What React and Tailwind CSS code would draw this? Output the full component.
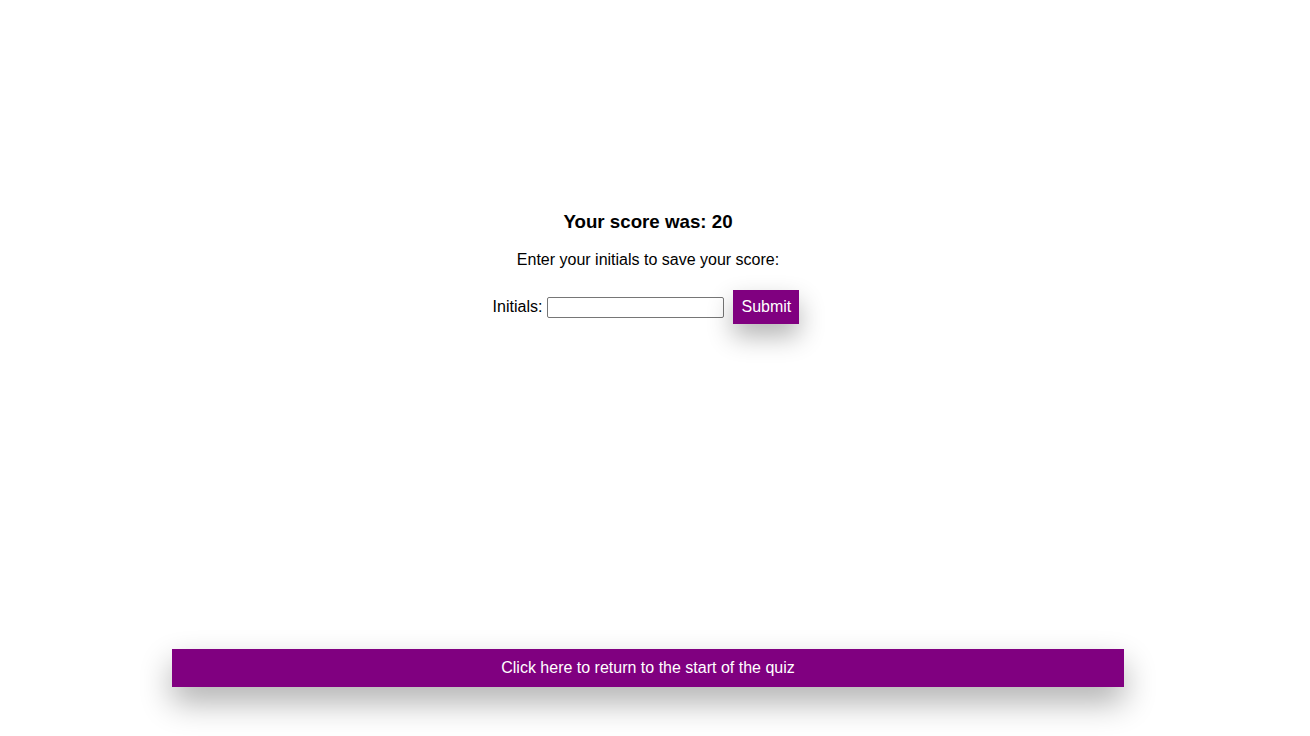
import React, { useState } from 'react';

const App = () => {
  const [initials, setInitials] = useState('');

  return (
    <div
      className="w-[1296px] h-[736px] bg-white text-black flex flex-col items-center"
      style={{ fontFamily: '"Liberation Sans", Arial, sans-serif' }}
    >
      {/* Score panel */}
      <div className="mt-[210px] flex flex-col items-center">
        <h1 className="text-[18.72px] leading-[24px] font-bold">Your score was: 20</h1>
        <p className="mt-[16px] text-[16px] leading-[20px]">Enter your initials to save your score:</p>
        <div className="mt-[20px] mr-[4px] flex items-center">
          <label className="text-[16px] leading-[20px] mr-[5px]">Initials:</label>
          <input
            type="text"
            value={initials}
            onChange={(e) => setInitials(e.target.value)}
            className="w-[177px] h-[21px] border border-[#767676] rounded-[2px] px-1 text-[13px] outline-none"
          />
          <button className="ml-[9px] w-[66px] h-[34px] bg-[#800080] text-white text-[16px] shadow-[0_12px_26px_rgba(0,0,0,0.3)]">
            Submit
          </button>
        </div>
      </div>

      {/* Return bar */}
      <div className="mt-auto mb-[49px] w-[952px]">
        <button className="w-full h-[38px] bg-[#800080] text-white text-[16px] shadow-[0_15px_32px_rgba(0,0,0,0.32)]">
          Click here to return to the start of the quiz
        </button>
      </div>
    </div>
  );
};

export default App;
